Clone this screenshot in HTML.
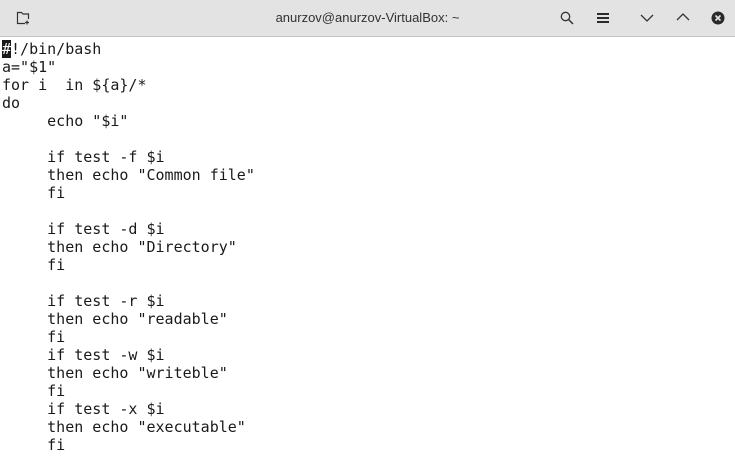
<!DOCTYPE html>
<html><head><style>
body{margin:0;width:735px;height:463px;overflow:hidden;background:#fff;font-family:"Liberation Sans",sans-serif}
.bar{position:absolute;left:0;top:0;width:735px;height:36px;background:#e3e3e3;border-bottom:1px solid #c4c4c4}
.title{position:absolute;left:0;width:735px;top:10px;text-align:center;font-size:13px;color:#333}
pre{position:absolute;left:2px;top:40px;margin:0;font-family:"DejaVu Sans Mono",monospace;font-size:15px;line-height:18px;color:#1a1a1a}
.cur{background:#1a1a1a;color:#fff}
svg{position:absolute}
</style></head><body>
<div class="bar"><div class="title">anurzov@anurzov-VirtualBox: ~</div>
<svg style="left:16px;top:11px" width="14" height="14" viewBox="0 0 14 14"><path d="M9 12.5H1.5V1.5H5.5L7 3H12.5V8" fill="none" stroke="#333" stroke-width="1.2"/><path d="M11 9.5v4M9 11.5h4" stroke="#333" stroke-width="1.2"/></svg>
<svg style="left:560px;top:11px" width="14" height="14" viewBox="0 0 14 14"><circle cx="5.5" cy="5.5" r="4.2" fill="none" stroke="#333" stroke-width="1.3"/><path d="M8.5 8.5L13 13" stroke="#333" stroke-width="1.5"/></svg>
<svg style="left:596px;top:12px" width="14" height="12" viewBox="0 0 14 12"><path d="M1 2h12M1 6h12M1 10h12" stroke="#2a2a2a" stroke-width="2"/></svg>
<svg style="left:640px;top:13px" width="14" height="10" viewBox="0 0 14 10"><path d="M1 2l6 6 6-6" fill="none" stroke="#333" stroke-width="1.3"/></svg>
<svg style="left:676px;top:12px" width="14" height="10" viewBox="0 0 14 10"><path d="M1 8l6-6 6 6" fill="none" stroke="#333" stroke-width="1.3"/></svg>
<svg style="left:711px;top:11px" width="14" height="14" viewBox="0 0 14 14"><circle cx="7" cy="7" r="6.5" fill="#2a2a2a"/><path d="M4.5 4.5l5 5M9.5 4.5l-5 5" stroke="#e3e3e3" stroke-width="1.6"/></svg>
</div>
<pre><span class="cur">#</span>!/bin/bash
a="$1"
for i  in ${a}/*
do
     echo "$i"

     if test -f $i
     then echo "Common file"
     fi

     if test -d $i
     then echo "Directory"
     fi

     if test -r $i
     then echo "readable"
     fi
     if test -w $i
     then echo "writeble"
     fi
     if test -x $i
     then echo "executable"
     fi</pre>
</body></html>
